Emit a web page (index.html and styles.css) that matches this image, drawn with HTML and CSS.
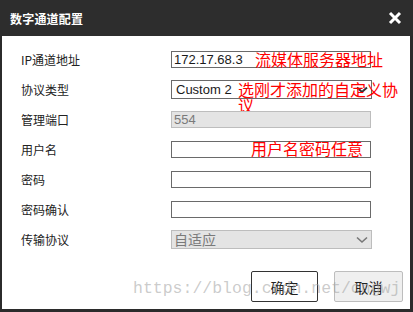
FILE: index.html
```html
<!DOCTYPE html>
<html>
<head>
  <meta charset="utf-8">
  <title>数字通道配置</title>
  <link rel="stylesheet" href="styles.css">
</head>
<body>
  <div class="dialog">
    <div class="titlebar">
      <span class="title">数字通道配置</span>
      <svg class="close" width="14" height="14" viewBox="0 0 14 14">
        <path d="M2 2 L12 12 M12 2 L2 12" stroke="#fff" stroke-width="3" fill="none"/>
      </svg>
    </div>
    <div class="content">
      <div class="form">
        <div class="row">
          <span class="label">IP通道地址</span>
          <div class="field">
            <div class="box">172.17.68.3</div>
            <span class="note note-ip">流媒体服务器地址</span>
          </div>
        </div>
        <div class="row">
          <span class="label">协议类型</span>
          <div class="field">
            <div class="box select">Custom 2
              <svg class="chevron" width="12" height="8" viewBox="0 0 12 8">
                <path d="M1 1.5 L6 6 L11 1.5" stroke="#333" stroke-width="2" fill="none"/>
              </svg>
            </div>
            <span class="note note-proto">选刚才添加的自定义协议</span>
          </div>
        </div>
        <div class="row">
          <span class="label">管理端口</span>
          <div class="field">
            <div class="box disabled">554</div>
          </div>
        </div>
        <div class="row">
          <span class="label">用户名</span>
          <div class="field">
            <div class="box"></div>
            <span class="note note-user">用户名密码任意</span>
          </div>
        </div>
        <div class="row">
          <span class="label">密码</span>
          <div class="field">
            <div class="box"></div>
          </div>
        </div>
        <div class="row">
          <span class="label">密码确认</span>
          <div class="field">
            <div class="box"></div>
          </div>
        </div>
        <div class="row">
          <span class="label">传输协议</span>
          <div class="field">
            <div class="box select disabled">自适应
              <svg class="chevron" width="12" height="8" viewBox="0 0 12 8">
                <path d="M1 1.5 L6 6 L11 1.5" stroke="#777" stroke-width="1.6" fill="none"/>
              </svg>
            </div>
          </div>
        </div>
      </div>
      <div class="footer">
        <button class="btn btn-ok">确定</button>
        <button class="btn btn-cancel">取消</button>
      </div>
      <div class="watermark">https://blog.csdn.net/cngwj</div>
    </div>
  </div>
</body>
</html>
```

FILE: styles.css
```css
html, body {
  margin: 0;
  height: 100%;
  background: #fff;
}

.dialog {
  height: 312px;
  box-sizing: border-box;
  border-left: 2px solid #2b2b2b;
  border-right: 3px solid #2b2b2b;
  border-bottom: 3px solid #2b2b2b;
  display: flex;
  flex-direction: column;
  font-family: "Noto Sans CJK SC", "Liberation Sans", sans-serif;
}

.titlebar {
  height: 36px;
  background: #2d2d2d;
  margin-left: -2px;
  margin-right: -3px;
  padding-left: 10px;
  padding-right: 10px;
  display: flex;
  align-items: center;
  justify-content: space-between;
}

.title {
  color: #fff;
  font-size: 12px;
  font-weight: bold;
  letter-spacing: 0.2px;
}

.close {
  margin-right: 1px;
}

.content {
  flex: 1;
  position: relative;
  display: flex;
  flex-direction: column;
}

.form {
  padding-top: 8px;
}

.row {
  height: 30px;
  display: flex;
  align-items: center;
}

.label {
  width: 150px;
  padding-left: 19px;
  font-size: 12px;
  color: #222;
}

.field {
  position: relative;
}

.box {
  width: 200px;
  height: 17px;
  box-sizing: border-box;
  border: 1px solid #6a6a6a;
  font-family: "Liberation Sans", Arial, sans-serif;
  font-size: 13px;
  line-height: 15px;
  padding-left: 2px;
  color: #1a1a1a;
  position: relative;
}

.select {
  width: 201px;
  height: 19px;
  line-height: 17px;
  padding-left: 4px;
}

.disabled {
  border-color: #bdbdbd;
  background: #e4e4e4;
  color: #7a7a7a;
}

.select.disabled {
  padding-left: 2px;
  font-family: "Noto Sans CJK SC", sans-serif;
  font-size: 14px;
}

.chevron {
  position: absolute;
  right: 3px;
  top: 5px;
}

.note {
  position: absolute;
  color: #f00;
  font-size: 16px;
  line-height: 16px;
  white-space: nowrap;
}

.note-ip {
  left: 84px;
  top: 0;
}

.note-proto {
  left: 67px;
  top: 1px;
  width: 162px;
  white-space: normal;
}

.note-user {
  left: 80px;
  top: -1px;
}

.footer {
  margin-top: 17px;
  padding-right: 7px;
  display: flex;
  justify-content: flex-end;
  gap: 16px;
}

.btn {
  height: 31px;
  font-family: "Noto Sans CJK SC", sans-serif;
  font-size: 14px;
  color: #222;
  border-radius: 2px;
  padding: 0;
}

.btn-ok {
  width: 67px;
  background: #fff;
  border: 1px solid #333;
}

.btn-cancel {
  width: 69px;
  background: #efefef;
  border: 1px solid #bdbdbd;
}

.watermark {
  position: absolute;
  left: 131px;
  top: 243px;
  font-family: "Liberation Mono", monospace;
  font-size: 16.5px;
  color: rgba(160, 160, 160, 0.55);
  pointer-events: none;
}
```
